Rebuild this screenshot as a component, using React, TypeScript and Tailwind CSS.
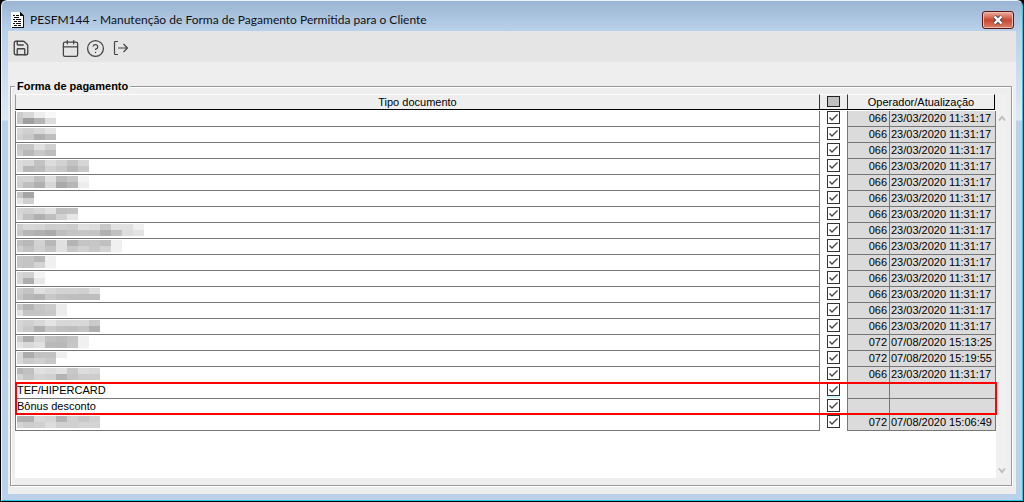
import { useState } from 'react';
import type { ReactNode } from 'react';
import { Calendar, CircleHelp, Save } from 'lucide-react';

interface PaymentRow {
  name?: string;
  // grey levels of a masked name, one hex pair per block: upper and lower line
  mask?: [string, string];
  operator?: string;
  updated?: string;
}

const FIRST_LOAD = { operator: '066', updated: '23/03/2020 11:31:17' };

const rowsBefore: PaymentRow[] = [
  { mask: ['cc d8 ee f8', 'c6 a0 b4 dc'], ...FIRST_LOAD },
  { mask: ['d8 d0 d8 e4', 'd2 c8 b0 be'], ...FIRST_LOAD },
  { mask: ['c6 c6 e0 d0', 'cc b8 c8 be'], ...FIRST_LOAD },
  { mask: ['dc d8 c2 dc d2 c4 d6', 'dc b8 bc d0 c8 b8 c8'], ...FIRST_LOAD },
  { mask: ['d4 d4 c0 e0 bc c6 f4', 'd0 be b0 d6 aa b6 ec'], ...FIRST_LOAD },
  { mask: ['c6 a6', 'e4 d0'], ...FIRST_LOAD },
  { mask: ['d4 d0 d8 e2 c0 c2', 'd8 c0 b0 be d2 e6'], ...FIRST_LOAD },
  { mask: ['ce d8 d6 ce d0 cc e0 dc c8 e0 e0 f0', 'c8 b6 b0 aa be c4 c6 c4 b0 c0 dc e2'], ...FIRST_LOAD },
  { mask: ['c0 b8 d2 b8 e0 b4 c4 c6 c0 f0', 'ce c2 d0 c4 e0 c8 d2 c8 d4 f0'], ...FIRST_LOAD },
  { mask: ['c6 c4 b8 f0', 'c6 c4 d4 f0'], ...FIRST_LOAD },
  { mask: ['d6 d0 f4', 'd6 ae e8'], ...FIRST_LOAD },
  { mask: ['cc c4 e0 d8 d2 d2 d0 de', 'c8 b8 b4 c8 c0 be be be'], ...FIRST_LOAD },
  { mask: ['c8 b4 c6 cc ec', 'e2 c4 c4 c8 ec'], ...FIRST_LOAD },
  { mask: ['d6 d0 d8 e4 d8 d8 d8 ca', 'd4 c8 b0 c8 c0 be c4 b0'], ...FIRST_LOAD },
  { mask: ['cc ac d6 c0 bc c4 f0', 'e2 d8 e0 ba b8 c6 f0'], operator: '072', updated: '07/08/2020 15:13:25' },
  { mask: ['d8 ac c2 c2 f0', 'd8 ca d0 c8 ff'], operator: '072', updated: '07/08/2020 15:19:55' },
  { mask: ['b8 c0 e0 dc e2 c8 dc d8', 'd4 c4 d4 d0 b4 c4 cc cc'], ...FIRST_LOAD },
];

const rowsNew: PaymentRow[] = [{ name: 'TEF/HIPERCARD' }, { name: 'Bônus desconto' }];

const rowsAfter: PaymentRow[] = [
  { mask: ['b2 b0 d8 d4 b4 d0 c8 d0', 'd4 cc d0 dc d0 d0 d4 d4'], operator: '072', updated: '07/08/2020 15:06:49' },
];

function MaskedName({ lines }: { lines: [string, string] }) {
  return (
    <div aria-label="Nome oculto" className="pt-px">
      {lines.map((line, i) => (
        <div key={i} className="flex h-1.5">
          {line.split(' ').map((level, j) => (
            <span
              key={j}
              className="w-[11px] first:w-1.5"
              style={{ backgroundColor: `#${level}${level}${level}` }}
            />
          ))}
        </div>
      ))}
    </div>
  );
}

function Row({ row, active }: { row: PaymentRow; active?: boolean }) {
  const [checked, setChecked] = useState(true);

  return (
    <tr className="h-4 align-top">
      <td className="border-x border-b border-[#777] bg-white p-0 pl-px leading-[15px]">
        {row.mask ? <MaskedName lines={row.mask} /> : row.name}
      </td>
      <td className="bg-white p-0">
        <label className={`relative mx-auto block h-[15px] w-[13px] ${active ? 'bg-[#ccf6fb]' : ''}`}>
          <input
            type="checkbox"
            aria-label={row.name ?? 'Permitida'}
            checked={checked}
            onChange={() => setChecked(!checked)}
            className="peer block size-[13px] appearance-none border border-[#333] bg-white"
          />
          <svg
            viewBox="0 0 13 13"
            className="pointer-events-none absolute top-0 left-0 hidden size-[13px] peer-checked:block"
            fill="none"
            stroke="#444"
            strokeWidth="1.4"
          >
            <path d="M2.5 6.5 5 9l5.5-5.5" />
          </svg>
        </label>
      </td>
      <td className="border-x border-b border-[#777] bg-[#dbdbdb] p-0 pr-0.5 text-right leading-[15px]">
        {row.operator}
      </td>
      <td className="border-r border-b border-[#777] bg-[#dbdbdb] p-0 pl-px leading-[15px] whitespace-nowrap">
        {row.updated}
      </td>
    </tr>
  );
}

function ToolButton({ label, children }: { label: string; children: ReactNode }) {
  return (
    <button type="button" aria-label={label} className="flex w-[25px] items-center justify-center text-[#444]">
      {children}
    </button>
  );
}

function TitleBar() {
  return (
    <header className="flex h-[30px] items-center pt-2 pr-[2px] pl-[3px]">
      <svg viewBox="0 0 13 16" className="h-4 w-[13px]" shapeRendering="crispEdges">
        <path d="M0 0h9l4 4v12H0z" fill="#fff" />
        <path d="M12 4h1v12H1v-1h11zM9 0h1v1h1v1h1v1h1v1H9z" fill="#111" />
        <path
          d="M2 3h2v1H2zM5 3h3v1H5zM3 5h5v1H3zM2 7h2v1H2zM5 7h5v1H5zM3 9h3v1H3zM7 9h3v1H7zM2 11h2v1H2zM5 11h5v1H5zM3 13h3v1H3zM7 13h3v1H7z"
          fill="#111"
        />
      </svg>
      <h1 className="ml-[6px] flex-1 font-[Lato,'Open_Sans',sans-serif] text-[12px] leading-4 text-[#111]">
        PESFM144 - Manutenção de Forma de Pagamento Permitida para o Cliente
      </h1>
      <button
        type="button"
        aria-label="Fechar"
        className="flex h-[18px] w-8 items-center justify-center rounded-[3px] border border-[#5c1717] bg-linear-to-b from-[#eab0a4] via-[#c8442f] via-50% to-[#d98068] shadow-[inset_0_0_0_1px_#eeb9ae]"
      >
        <svg viewBox="0 0 12 10" className="h-2.5 w-3" fill="none">
          <path d="m2.5 1.5 7 7m0-7-7 7" stroke="#5b4a52" strokeWidth="4.4" />
          <path d="m2.5 1.5 7 7m0-7-7 7" stroke="#fff" strokeWidth="2.4" />
        </svg>
      </button>
    </header>
  );
}

function App() {
  return (
    <div className="flex min-h-screen flex-col bg-black pr-px pb-px pl-px font-['Liberation_Sans',Arial,sans-serif] text-[11px] text-black">
      <div className="flex flex-1 flex-col rounded-t-md border border-t-[#eaf2fb] border-r-[#25c8dc] border-b-[#25c8dc] border-l-[#eaf2fb] bg-[linear-gradient(#9ab4d2,#b9d1ea_30px,#dfe9f5_119px,#b9d1ea_120px)] px-1.5 pb-1.5">
        <TitleBar />

        <main className="flex flex-1 flex-col bg-[#eee]">
          <nav className="flex h-[31px] items-center bg-[#e5e5e5] pt-[3px]">
            <ToolButton label="Salvar">
              <Save size={18} strokeWidth={1.8} />
            </ToolButton>
            <span className="w-[25px]" />
            <ToolButton label="Calendário">
              <Calendar size={19} strokeWidth={1.6} />
            </ToolButton>
            <ToolButton label="Ajuda">
              <CircleHelp size={19} strokeWidth={1.6} />
            </ToolButton>
            <ToolButton label="Sair">
              <svg viewBox="0 0 16 16" className="size-4" fill="none" stroke="currentColor" strokeWidth="1.2">
                <path d="M5 1.5H2.5a1 1 0 0 0-1 1v11a1 1 0 0 0 1 1H5M5 8h9.500M10.500 4l4 4-4 4" />
              </svg>
            </ToolButton>
          </nav>

          <div className="flex flex-1 pt-4 pr-1 pb-2 pl-[2px]">
            <fieldset className="flex min-w-0 flex-1 border border-[#9a9a9a] px-1 pb-[7px] shadow-[1px_1px_0_#fff,inset_1px_1px_0_#fff]">
              <legend className="bg-[#eee] px-[2px] text-[11px] leading-4 font-bold">Forma de pagamento</legend>

              <div className="min-w-0 flex-1 bg-white">
                <table className="w-full table-fixed border-separate border-spacing-0">
                  <colgroup>
                    <col />
                    <col className="w-[27px]" />
                    <col className="w-[43px]" />
                    <col className="w-[106px]" />
                  </colgroup>
                  <thead>
                    <tr className="h-[17px] bg-[#eee]">
                      <th className="border-b border-b-white p-0 font-normal">
                        <div className="h-4 border border-t-white border-r-[#333] border-b-black border-l-[#999] leading-[14px]">
                          Tipo documento
                        </div>
                      </th>
                      <th className="border-b border-b-white p-0">
                        <div className="flex h-4 items-start justify-center border-y border-t-white border-b-black pt-px">
                          <button
                            type="button"
                            aria-label="Marcar todos"
                            className="h-[11px] w-[13px] border border-[#222] bg-[#c0c0c0]"
                          />
                        </div>
                      </th>
                      <th colSpan={2} className="border-b border-b-white p-0 font-normal">
                        <div className="mr-px h-4 border border-t-white border-r-black border-b-black border-l-[#333] leading-[14px]">
                          Operador/Atualização
                        </div>
                      </th>
                    </tr>
                  </thead>
                  <tbody>
                    {rowsBefore.map((row, i) => (
                      <Row key={i} row={row} />
                    ))}
                  </tbody>
                  {/* newly added payment types, outlined in red */}
                  <tbody className="relative after:pointer-events-none after:absolute after:-top-px after:-right-px after:bottom-0 after:left-0 after:border-2 after:border-[#f00]">
                    {rowsNew.map((row, i) => (
                      <Row key={row.name} row={row} active={i === 0} />
                    ))}
                  </tbody>
                  <tbody>
                    {rowsAfter.map((row, i) => (
                      <Row key={i} row={row} />
                    ))}
                  </tbody>
                </table>
              </div>

              <div className="flex w-[11px] flex-col items-center justify-between bg-[#f0f0f0] pt-[21px] pb-1">
                <svg viewBox="0 0 8 7" className="h-[7px] w-2" fill="none" stroke="#bbb" strokeWidth="1.8">
                  <path d="m1 5.500 3-3.500 3 3.500" />
                </svg>
                <svg viewBox="0 0 8 7" className="h-[7px] w-2" fill="none" stroke="#bbb" strokeWidth="1.8">
                  <path d="m1 1.500 3 3.500 3-3.500" />
                </svg>
              </div>
            </fieldset>
          </div>
        </main>
      </div>
    </div>
  );
}

export default App;
